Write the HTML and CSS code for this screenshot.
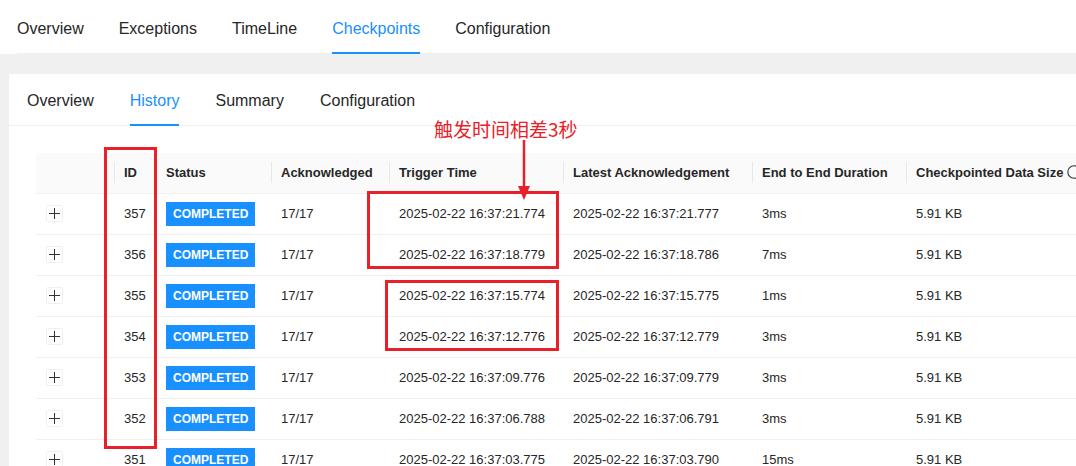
FILE: index.html
```html
<!DOCTYPE html>
<html lang="en">
<head>
    <meta charset="UTF-8">
    <meta name="viewport" content="width=device-width, initial-scale=1.0">
    <title>Checkpoints - History</title>
    <link rel="stylesheet" href="styles.css">
</head>
<body>
<div class="page">
    <div class="top-bar">
        <nav class="top-tabs">
            <span class="tab">Overview</span>
            <span class="tab">Exceptions</span>
            <span class="tab">TimeLine</span>
            <span class="tab active">Checkpoints</span>
            <span class="tab">Configuration</span>
        </nav>
    </div>

    <div class="card">
        <nav class="sub-tabs">
            <span class="tab">Overview</span>
            <span class="tab active">History</span>
            <span class="tab">Summary</span>
            <span class="tab">Configuration</span>
        </nav>

        <div class="card-body">
            <table class="history-table">
                <colgroup>
                    <col class="col-expand">
                    <col class="col-id">
                    <col class="col-status">
                    <col class="col-ack">
                    <col class="col-trigger">
                    <col class="col-latest">
                    <col class="col-duration">
                    <col class="col-size">
                </colgroup>
                <thead>
                    <tr>
                        <th></th>
                        <th class="sep">ID</th>
                        <th class="sep">Status</th>
                        <th class="sep">Acknowledged</th>
                        <th class="sep">Trigger Time</th>
                        <th class="sep">Latest Acknowledgement</th>
                        <th class="sep">End to End Duration</th>
                        <th class="sep">Checkpointed Data Size<svg class="help-icon" width="14" height="14" viewBox="0 0 14 14"><circle cx="7" cy="7" r="6.2" fill="none" stroke="#333" stroke-width="1.1"/></svg></th>
                    </tr>
                </thead>
                <tbody>
                    <tr>
                        <td><span class="expand-btn"></span></td>
                        <td>357</td>
                        <td><span class="badge">COMPLETED</span></td>
                        <td>17/17</td>
                        <td>2025-02-22 16:37:21.774</td>
                        <td>2025-02-22 16:37:21.777</td>
                        <td>3ms</td>
                        <td>5.91 KB</td>
                    </tr>
                    <tr>
                        <td><span class="expand-btn"></span></td>
                        <td>356</td>
                        <td><span class="badge">COMPLETED</span></td>
                        <td>17/17</td>
                        <td>2025-02-22 16:37:18.779</td>
                        <td>2025-02-22 16:37:18.786</td>
                        <td>7ms</td>
                        <td>5.91 KB</td>
                    </tr>
                    <tr>
                        <td><span class="expand-btn"></span></td>
                        <td>355</td>
                        <td><span class="badge">COMPLETED</span></td>
                        <td>17/17</td>
                        <td>2025-02-22 16:37:15.774</td>
                        <td>2025-02-22 16:37:15.775</td>
                        <td>1ms</td>
                        <td>5.91 KB</td>
                    </tr>
                    <tr>
                        <td><span class="expand-btn"></span></td>
                        <td>354</td>
                        <td><span class="badge">COMPLETED</span></td>
                        <td>17/17</td>
                        <td>2025-02-22 16:37:12.776</td>
                        <td>2025-02-22 16:37:12.779</td>
                        <td>3ms</td>
                        <td>5.91 KB</td>
                    </tr>
                    <tr>
                        <td><span class="expand-btn"></span></td>
                        <td>353</td>
                        <td><span class="badge">COMPLETED</span></td>
                        <td>17/17</td>
                        <td>2025-02-22 16:37:09.776</td>
                        <td>2025-02-22 16:37:09.779</td>
                        <td>3ms</td>
                        <td>5.91 KB</td>
                    </tr>
                    <tr>
                        <td><span class="expand-btn"></span></td>
                        <td>352</td>
                        <td><span class="badge">COMPLETED</span></td>
                        <td>17/17</td>
                        <td>2025-02-22 16:37:06.788</td>
                        <td>2025-02-22 16:37:06.791</td>
                        <td>3ms</td>
                        <td>5.91 KB</td>
                    </tr>
                    <tr>
                        <td><span class="expand-btn"></span></td>
                        <td>351</td>
                        <td><span class="badge">COMPLETED</span></td>
                        <td>17/17</td>
                        <td>2025-02-22 16:37:03.775</td>
                        <td>2025-02-22 16:37:03.790</td>
                        <td>15ms</td>
                        <td>5.91 KB</td>
                    </tr>
                </tbody>
            </table>
        </div>
    </div>

    <!-- red markup drawn over the screenshot -->
    <div class="note-text">触发时间相差3秒</div>
    <svg class="note-arrow" width="16" height="62" viewBox="0 0 16 62">
        <line x1="8" y1="0" x2="8" y2="48" stroke="#e8202a" stroke-width="2.5"/>
        <polygon points="2,46 14,46 8,60" fill="#e8202a"/>
    </svg>
    <div class="note-box box-id"></div>
    <div class="note-box box-first"></div>
    <div class="note-box box-second"></div>
</div>
</body>
</html>
```

FILE: styles.css
```css
:root {
    --primary: #1890ff;
    --text: #262626;
    --border: #f0f0f0;
    --bg: #f0f0f0;
    --mark: #e8202a;
}
* {
    margin: 0;
    padding: 0;
    box-sizing: border-box;
}
html,
body {
    width: 1076px;
    height: 466px;
    overflow: hidden;
}
body {
    background: var(--bg);
    color: var(--text);
    font-family: 'Liberation Sans', Arial, sans-serif;
}
.page {
    position: relative;
    height: 100%;
}
.top-bar {
    background: #fff;
    padding-left: 17px;
}
.top-tabs,
.sub-tabs {
    display: flex;
    gap: 35px;
    border-bottom: 1px solid var(--border);
}
.tab {
    position: relative;
    font-size: 16px;
    line-height: 20px;
    color: var(--text);
    white-space: nowrap;
}
.top-tabs .tab {
    padding: 19px 0 14px;
}
.sub-tabs .tab {
    padding: 17px 0 14px;
}
.tab.active {
    color: var(--primary);
}
.tab.active::after {
    content: '';
    position: absolute;
    left: 0;
    right: 0;
    bottom: -1px;
    height: 2px;
    background: var(--primary);
}
.card {
    background: #fff;
    margin: 20px 0 0 9px;
    height: 400px;
    overflow: hidden;
}
.sub-tabs {
    padding: 0 18px;
    gap: 36px;
}
.card-body {
    padding: 27px 0 0 27px;
}
.history-table {
    table-layout: fixed;
    width: 1070px;
    border-collapse: collapse;
    font-size: 13px;
}
.col-expand { width: 78px; }
.col-id { width: 42px; }
.col-status { width: 115px; }
.col-ack { width: 118px; }
.col-trigger { width: 174px; }
.col-latest { width: 189px; }
.col-duration { width: 154px; }
.col-size { width: 200px; }
.history-table th {
    position: relative;
    height: 40px;
    padding: 0 0 0 10px;
    background: #fafafa;
    border-bottom: 1px solid var(--border);
    font-size: 13px;
    font-weight: bold;
    text-align: left;
    white-space: nowrap;
    color: var(--text);
}
.history-table th.sep::before {
    content: '';
    position: absolute;
    left: 0;
    top: 9px;
    width: 1px;
    height: 21px;
    background: #e8e8e8;
}
.help-icon {
    vertical-align: -2px;
    margin-left: 4px;
}
.history-table td {
    height: 41px;
    padding: 0 0 0 10px;
    border-bottom: 1px solid var(--border);
    white-space: nowrap;
    color: var(--text);
}
.expand-btn {
    position: relative;
    display: block;
    width: 17px;
    height: 17px;
    border: 1px solid var(--border);
    border-radius: 2px;
    background: #fff;
}
.expand-btn::before,
.expand-btn::after {
    content: '';
    position: absolute;
    background: #333;
}
.expand-btn::before {
    left: 2px;
    right: 2px;
    top: 7px;
    height: 1px;
}
.expand-btn::after {
    top: 2px;
    bottom: 2px;
    left: 7px;
    width: 1px;
}
.badge {
    display: inline-block;
    padding: 0 7px;
    line-height: 24px;
    background: var(--primary);
    color: #fff;
    font-weight: bold;
    font-size: 12px;
}
.note-text {
    position: absolute;
    left: 434px;
    top: 119px;
    font-family: 'Noto Sans CJK SC', sans-serif;
    font-size: 19px;
    line-height: 20px;
    color: var(--mark);
}
.note-arrow {
    position: absolute;
    left: 516px;
    top: 140px;
}
.note-box {
    position: absolute;
    border: 3px solid var(--mark);
}
.box-id {
    left: 104px;
    top: 147px;
    width: 53px;
    height: 302px;
}
.box-first {
    left: 367px;
    top: 191px;
    width: 192px;
    height: 78px;
}
.box-second {
    left: 385px;
    top: 280px;
    width: 174px;
    height: 71px;
}
```
